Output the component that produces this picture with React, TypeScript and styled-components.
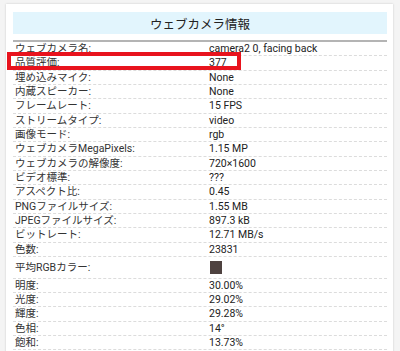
import styled, { createGlobalStyle } from "styled-components";

const GlobalStyle = createGlobalStyle`
  html, body {
    margin: 0;
    padding: 0;
    background: #f4f4f4;
    font-family: Roboto, "Noto Sans CJK JP", sans-serif;
    color: #222;
  }
`;

const rows: { label: string; value: string; swatch?: string; marked?: boolean }[] = [
  { label: "ウェブカメラ名:", value: "camera2 0, facing back" },
  { label: "品質評価:", value: "377", marked: true },
  { label: "埋め込みマイク:", value: "None" },
  { label: "内蔵スピーカー:", value: "None" },
  { label: "フレームレート:", value: "15 FPS" },
  { label: "ストリームタイプ:", value: "video" },
  { label: "画像モード:", value: "rgb" },
  { label: "ウェブカメラMegaPixels:", value: "1.15 MP" },
  { label: "ウェブカメラの解像度:", value: "720×1600" },
  { label: "ビデオ標準:", value: "???" },
  { label: "アスペクト比:", value: "0.45" },
  { label: "PNGファイルサイズ:", value: "1.55 MB" },
  { label: "JPEGファイルサイズ:", value: "897.3 kB" },
  { label: "ビットレート:", value: "12.71 MB/s" },
  { label: "色数:", value: "23831" },
  { label: "平均RGBカラー:", value: "", swatch: "#4e4240" },
  { label: "明度:", value: "30.00%" },
  { label: "光度:", value: "29.02%" },
  { label: "輝度:", value: "29.28%" },
  { label: "色相:", value: "14°" },
  { label: "飽和:", value: "13.73%" },
];

export default function App() {
  return (
    <>
      <GlobalStyle />
      <Page>
        <Card>
          <Title>ウェブカメラ情報</Title>
          <Table>
            {rows.map((row) => (
              <Row key={row.label} tall={!!row.swatch}>
                <Label>{row.label}</Label>
                <Value>
                  {row.swatch ? <Swatch color={row.swatch} /> : row.value}
                </Value>
                {row.marked && <Highlight />}
              </Row>
            ))}
          </Table>
        </Card>
      </Page>
    </>
  );
}

const Page = styled.div`
  width: 400px;
  height: 351px;
  overflow: hidden;
  padding: 4px 7px 0 6px;
  box-sizing: border-box;
`;

const Card = styled.div`
  background: #fff;
  box-shadow: 0 0 2px rgba(0, 0, 0, 0.18);
  padding: 8px 6px 10px 7px;
`;

const Title = styled.div`
  height: 22px;
  background: #e2f5fd;
  display: flex;
  align-items: center;
  justify-content: center;
  font-family: "Noto Sans CJK JP", sans-serif;
  font-size: 12.5px;
  color: #222;
`;

const Table = styled.div`
  margin-top: 6px;
  border-top: 2px solid #b4b4b4;
`;

const Row = styled.div<{ tall: boolean }>`
  position: relative;
  display: grid;
  grid-template-columns: 196px 1fr;
  align-items: center;
  height: ${(p) => (p.tall ? "21.7px" : "14.33px")};
  border-bottom: 1px dashed #dcdcdc;
  box-sizing: border-box;
  font-size: 10.5px;
  line-height: 13px;
`;

const Label = styled.div`
  padding-left: 2px;
  font-family: Roboto, "Noto Sans CJK JP", sans-serif;
  color: #333;
  white-space: nowrap;
`;

const Value = styled.div`
  display: flex;
  align-items: center;
  color: #222;
  white-space: nowrap;
`;

const Swatch = styled.span<{ color: string }>`
  display: inline-block;
  width: 12px;
  height: 13px;
  background: ${(p) => p.color};
  margin-left: 1px;
`;

const Highlight = styled.div`
  position: absolute;
  left: -6px;
  top: -4px;
  width: 234px;
  height: 18px;
  border: 4px solid #e8131d;
  box-sizing: border-box;
  pointer-events: none;
`;
